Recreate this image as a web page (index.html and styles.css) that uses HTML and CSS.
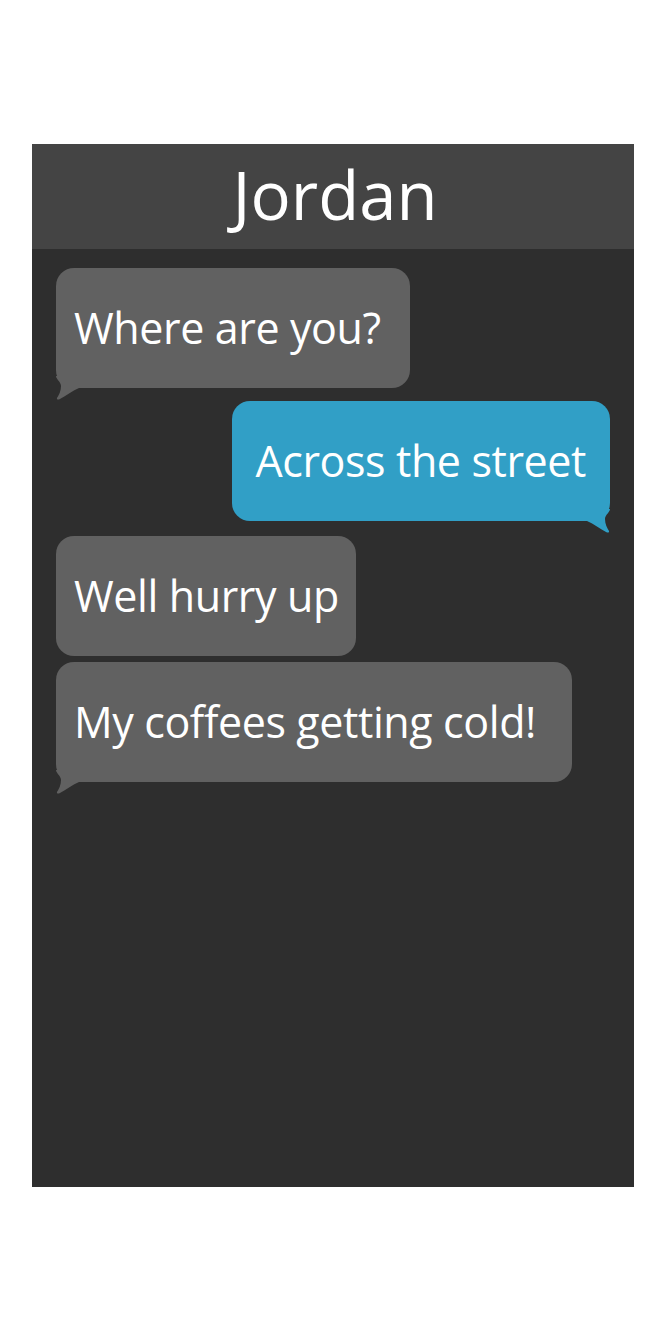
FILE: index.html
```html
<!DOCTYPE html>
<html>
<head>
<meta charset="utf-8">
<link rel="stylesheet" href="styles.css">
</head>
<body>
<div class="phone">
  <div class="header"><span>Jordan</span></div>
  <div class="messages">
    <div class="bubble in first">
      <span>Where are you?</span>
      <svg class="tail tail-left" viewBox="0 0 24 24" width="24" height="24"><path d="M0 0 C0 3 5 6 5 10 C5 15 3 19 1 22 C0.5 23.5 2 24 3.5 23.3 C10 20 16 15 23 12 L24 12 L24 0 Z"/></svg>
    </div>
    <div class="bubble out second">
      <span>Across the street</span>
      <svg class="tail tail-right" viewBox="0 0 24 24" width="24" height="24"><path d="M0 0 C0 3 5 6 5 10 C5 15 3 19 1 22 C0.5 23.5 2 24 3.5 23.3 C10 20 16 15 23 12 L24 12 L24 0 Z"/></svg>
    </div>
    <div class="bubble in third">
      <span>Well hurry up</span>
    </div>
    <div class="bubble in fourth">
      <span>My coffees getting cold!</span>
      <svg class="tail tail-left" viewBox="0 0 24 24" width="24" height="24"><path d="M0 0 C0 3 5 6 5 10 C5 15 3 19 1 22 C0.5 23.5 2 24 3.5 23.3 C10 20 16 15 23 12 L24 12 L24 0 Z"/></svg>
    </div>
  </div>
</div>
</body>
</html>
```

FILE: styles.css
```css
html, body {
  margin: 0;
  padding: 0;
  background: #ffffff;
}
body {
  font-family: "Open Sans", "Liberation Sans", sans-serif;
}
.phone {
  margin: 144px 0 0 32px;
  width: 602px;
  height: 1043px;
  background: #2e2e2e;
  display: flex;
  flex-direction: column;
}
.header {
  height: 105px;
  background: #444444;
  color: #ffffff;
  font-size: 67px;
  display: flex;
  align-items: center;
  justify-content: center;
  padding-left: 4px;
}
.header span {
  position: relative;
  top: -3px;
}
.messages {
  display: flex;
  flex-direction: column;
  align-items: flex-start;
  padding: 19px 24px 0 24px;
}
.bubble {
  position: relative;
  height: 120px;
  display: flex;
  align-items: center;
  padding: 0 20px 0 18px;
  border-radius: 18px;
  color: #ffffff;
  font-size: 43px;
  letter-spacing: -0.4px;
  box-sizing: border-box;
}
.bubble span {
  position: relative;
  top: -1px;
}
.bubble.in {
  background: #616161;
  fill: #616161;
}
.bubble.out {
  background: #319fc6;
  fill: #319fc6;
  align-self: flex-end;
  padding: 0 24px 0 23px;
}
.first { padding-right: 29px; }
.second { margin-top: 13px; }
.third { margin-top: 15px; padding-right: 17px; }
.fourth { margin-top: 6px; padding-right: 36px; }
.tail {
  position: absolute;
  bottom: -12px;
}
.tail-left { left: 0; }
.tail-right {
  right: 0;
  transform: scaleX(-1);
}
```
